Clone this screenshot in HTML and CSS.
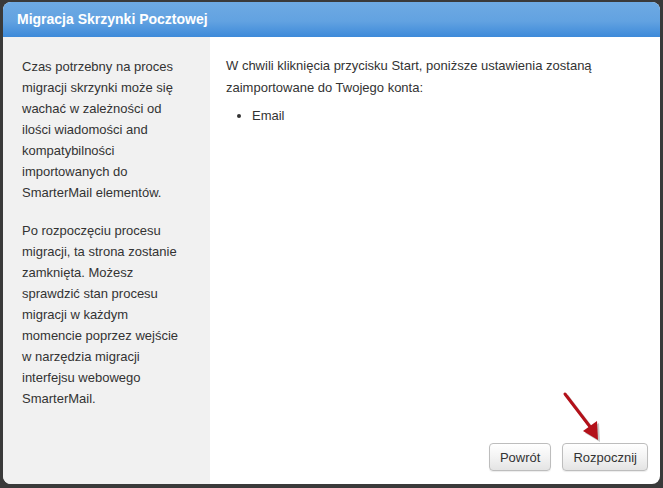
FILE: index.html
```html
<!DOCTYPE html>
<html lang="pl">
<head>
  <meta charset="UTF-8">
  <title>Migracja Skrzynki Pocztowej</title>
  <link rel="stylesheet" href="styles.css">
</head>
<body>
  <div class="dialog">
    <div class="dialog-header">Migracja Skrzynki Pocztowej</div>
    <div class="dialog-body">
      <!-- Sidebar with help text -->
      <div class="sidebar">
        <p>Czas potrzebny na proces migracji skrzynki może się wachać w zależności od ilości wiadomości and kompatybilności importowanych do SmarterMail elementów.</p>
        <p>Po rozpoczęciu procesu migracji, ta strona zostanie zamknięta. Możesz sprawdzić stan procesu migracji w każdym momencie poprzez wejście w narzędzia migracji interfejsu webowego SmarterMail.</p>
      </div>
      <!-- Main content -->
      <div class="content">
        <div class="content-text">
          <p>W chwili kliknięcia przycisku Start, poniższe ustawienia zostaną zaimportowane do Twojego konta:</p>
          <ul>
            <li>Email</li>
          </ul>
        </div>
        <div class="buttons">
          <button class="btn">Powrót</button>
          <button class="btn">Rozpocznij</button>
        </div>
        <svg class="arrow" width="50" height="60" viewBox="0 0 50 60">
          <line x1="4" y1="3" x2="30" y2="37" stroke="rgba(0,0,0,0.22)" stroke-width="3" transform="translate(2,2)"/>
          <polygon points="22,40 36,30 37,49" fill="rgba(0,0,0,0.22)" transform="translate(2,2)"/>
          <line x1="4" y1="3" x2="30" y2="37" stroke="#b3111a" stroke-width="3" stroke-linecap="round"/>
          <polygon points="22,40 36,30 37,49" fill="#b3111a"/>
        </svg>
      </div>
    </div>
  </div>
</body>
</html>
```

FILE: styles.css
```css
/* General */
body {
  margin: 0;
  background-color: #3a3a3a;
  font-family: 'Liberation Sans', Arial, sans-serif;
  font-size: 13px;
  color: #333333;
}

.dialog {
  margin: 2px 3px 0 3px;
  height: 482px;
  border-radius: 8px;
  overflow: hidden;
  background-color: #ffffff;
  display: flex;
  flex-direction: column;
}

.dialog-header {
  height: 35px;
  line-height: 35px;
  padding-left: 14px;
  font-weight: bold;
  font-size: 14px;
  color: #ffffff;
  background: linear-gradient(to bottom, #6eaae3 0%, #62a2e1 55%, #3d8ad9 100%);
  flex-shrink: 0;
}

.dialog-body {
  flex: 1;
  display: flex;
}

/* Sidebar */
.sidebar {
  width: 166px;
  padding: 19px 22px 0 19px;
  background-color: #f1f1f1;
}

.sidebar p {
  margin: 0 0 17px 0;
  line-height: 21px;
}

/* Content */
.content {
  flex: 1;
  position: relative;
  display: flex;
  flex-direction: column;
  padding: 18px 12px 13px 16px;
}

.content-text {
  flex: 1;
}

.content-text p {
  margin: 0;
  line-height: 22px;
}

.content-text ul {
  margin: 6px 0 0 0;
  padding-left: 26px;
  line-height: 21px;
}

.buttons {
  display: flex;
  justify-content: flex-end;
  gap: 11px;
}

.btn {
  font-family: 'Liberation Sans', Arial, sans-serif;
  font-size: 13px;
  color: #333333;
  height: 28px;
  padding: 0 10px;
  border: 1px solid #bdbdbd;
  border-radius: 4px;
  background: linear-gradient(to bottom, #ffffff 0%, #f3f3f3 50%, #e4e4e4 100%);
  box-shadow: 0 1px 1px rgba(0, 0, 0, 0.08);
  cursor: pointer;
}

.arrow {
  position: absolute;
  left: 351px;
  top: 354px;
}
```
